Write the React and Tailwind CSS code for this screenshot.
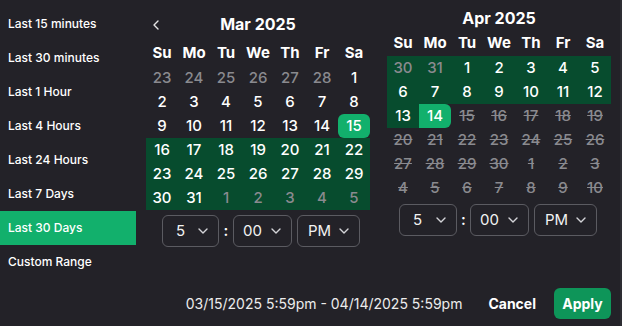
import React from "react";

const presets = [
  "Last 15 minutes",
  "Last 30 minutes",
  "Last 1 Hour",
  "Last 4 Hours",
  "Last 24 Hours",
  "Last 7 Days",
  "Last 30 Days",
  "Custom Range",
];

const dayNames = ["Su", "Mo", "Tu", "We", "Th", "Fr", "Sa"];

// state: o = outside month, r = in range, s = selected edge, x = disabled
const march = [
  [[23, "o"], [24, "o"], [25, "o"], [26, "o"], [27, "o"], [28, "o"], [1, ""]],
  [[2, ""], [3, ""], [4, ""], [5, ""], [6, ""], [7, ""], [8, ""]],
  [[9, ""], [10, ""], [11, ""], [12, ""], [13, ""], [14, ""], [15, "sl"]],
  [[16, "r"], [17, "r"], [18, "r"], [19, "r"], [20, "r"], [21, "r"], [22, "r"]],
  [[23, "r"], [24, "r"], [25, "r"], [26, "r"], [27, "r"], [28, "r"], [29, "r"]],
  [[30, "r"], [31, "r"], [1, "ro"], [2, "ro"], [3, "ro"], [4, "ro"], [5, "ro"]],
];

const april = [
  [[30, "ro"], [31, "ro"], [1, "r"], [2, "r"], [3, "r"], [4, "r"], [5, "r"]],
  [[6, "r"], [7, "r"], [8, "r"], [9, "r"], [10, "r"], [11, "r"], [12, "r"]],
  [[13, "r"], [14, "sr"], [15, "x"], [16, "x"], [17, "x"], [18, "x"], [19, "x"]],
  [[20, "x"], [21, "x"], [22, "x"], [23, "x"], [24, "x"], [25, "x"], [26, "x"]],
  [[27, "x"], [28, "x"], [29, "x"], [30, "x"], [1, "x"], [2, "x"], [3, "x"]],
  [[4, "x"], [5, "x"], [6, "x"], [7, "x"], [8, "x"], [9, "x"], [10, "x"]],
];

function Chevron() {
  return (
    <svg width="10" height="6" viewBox="0 0 10 6" fill="none">
      <path d="M1 1l4 4 4-4" stroke="#d4d4d8" strokeWidth="1.4" strokeLinecap="round" strokeLinejoin="round" />
    </svg>
  );
}

function Select({ value, w, pl }) {
  return (
    <div className={`flex h-8 items-center justify-between rounded-md border border-[#5b5b61] pr-[10px] ${w} ${pl}`}>
      <span className="text-[15px] text-[#f2f2f2]">{value}</span>
      <Chevron />
    </div>
  );
}

function Day({ n, st }) {
  let cls = "text-white";
  if (st.includes("r")) cls = "bg-[#074c2e] text-white";
  if (st.includes("o")) cls = cls.replace("text-white", "text-[#8a8a8f]");
  if (st === "sl") cls = "bg-[#12b06c] text-white rounded-md";
  if (st === "sr") cls = "bg-[#12b06c] text-white rounded-r-md";
  if (st === "x") cls = "text-[#8a8a8f] line-through";
  return (
    <div className={`flex h-6 w-8 items-center justify-center text-[15px] font-medium ${cls}`}>{n}</div>
  );
}

function Calendar({ title, weeks, pt, headMt, selMt, selPl, nav, w1, colonW }) {
  return (
    <div className={`w-[224px] ${pt}`}>
      <div className="relative flex h-5 items-center justify-center">
        {nav && (
          <svg className="absolute left-[7px] top-[6px]" width="6" height="10" viewBox="0 0 6 10" fill="none">
            <path d="M5 1L1 5l4 4" stroke="#e5e5e5" strokeWidth="1.4" strokeLinecap="round" strokeLinejoin="round" />
          </svg>
        )}
        <span className="text-base font-bold text-white">{title}</span>
      </div>
      <div className={`grid h-[26px] grid-cols-7 items-center ${headMt}`}>
        {dayNames.map((d) => (
          <div key={d} className="text-center text-[15px] font-bold text-white">{d}</div>
        ))}
      </div>
      <div className="grid grid-cols-7">
        {weeks.flat().map(([n, st], i) => (
          <Day key={i} n={n} st={st} />
        ))}
      </div>
      <div className={`flex items-center ${selMt} ${selPl}`}>
        <Select value="5" w={w1} pl="pl-[13px]" />
        <span className={`text-center text-[15px] font-semibold text-white ${colonW}`}>:</span>
        <Select value="00" w="w-[59px]" pl="pl-[9px]" />
        <div className="w-[5px]" />
        <Select value="PM" w="w-[63px]" pl="pl-[10px]" />
      </div>
    </div>
  );
}

export default function App() {
  return (
    <div
      className="flex h-[326px] w-[622px] border-r-2 border-[#2d2d32] bg-[#232228] text-white"
      style={{ fontFamily: "Inter, 'Noto Sans', sans-serif" }}
    >
      <div className="w-[136px] pt-[7px]">
        {presets.map((p) => (
          <div
            key={p}
            className={`flex h-[34px] items-center px-2 text-xs font-medium ${p === "Last 30 Days" ? "bg-[#12b06c]" : ""}`}
          >
            {p}
          </div>
        ))}
      </div>
      <div className="flex flex-1 flex-col">
        <div className="flex gap-[17px] pl-[10px]">
          <Calendar title="Mar 2025" weeks={march} pt="pt-[14px]" headMt="mt-[6px]" selMt="mt-[5px]" selPl="pl-[16px]" nav w1="w-[57px]" colonW="w-[14px]" />
          <Calendar title="Apr 2025" weeks={april} pt="pt-[8px]" headMt="mt-[2px]" selMt="mt-[4px]" selPl="pl-[12px]" w1="w-[58px]" colonW="w-[13px]" />
        </div>
        <div className="mt-auto flex items-center justify-end pb-[7px] pr-[9px]">
          <span className="text-sm text-[#ececec]">03/15/2025 5:59pm - 04/14/2025 5:59pm</span>
          <span className="ml-[26px] text-sm font-bold text-white">Cancel</span>
          <button className="ml-[18px] h-[31px] w-[57px] rounded-md bg-[#0e9559] text-sm font-bold text-white">Apply</button>
        </div>
      </div>
    </div>
  );
}
